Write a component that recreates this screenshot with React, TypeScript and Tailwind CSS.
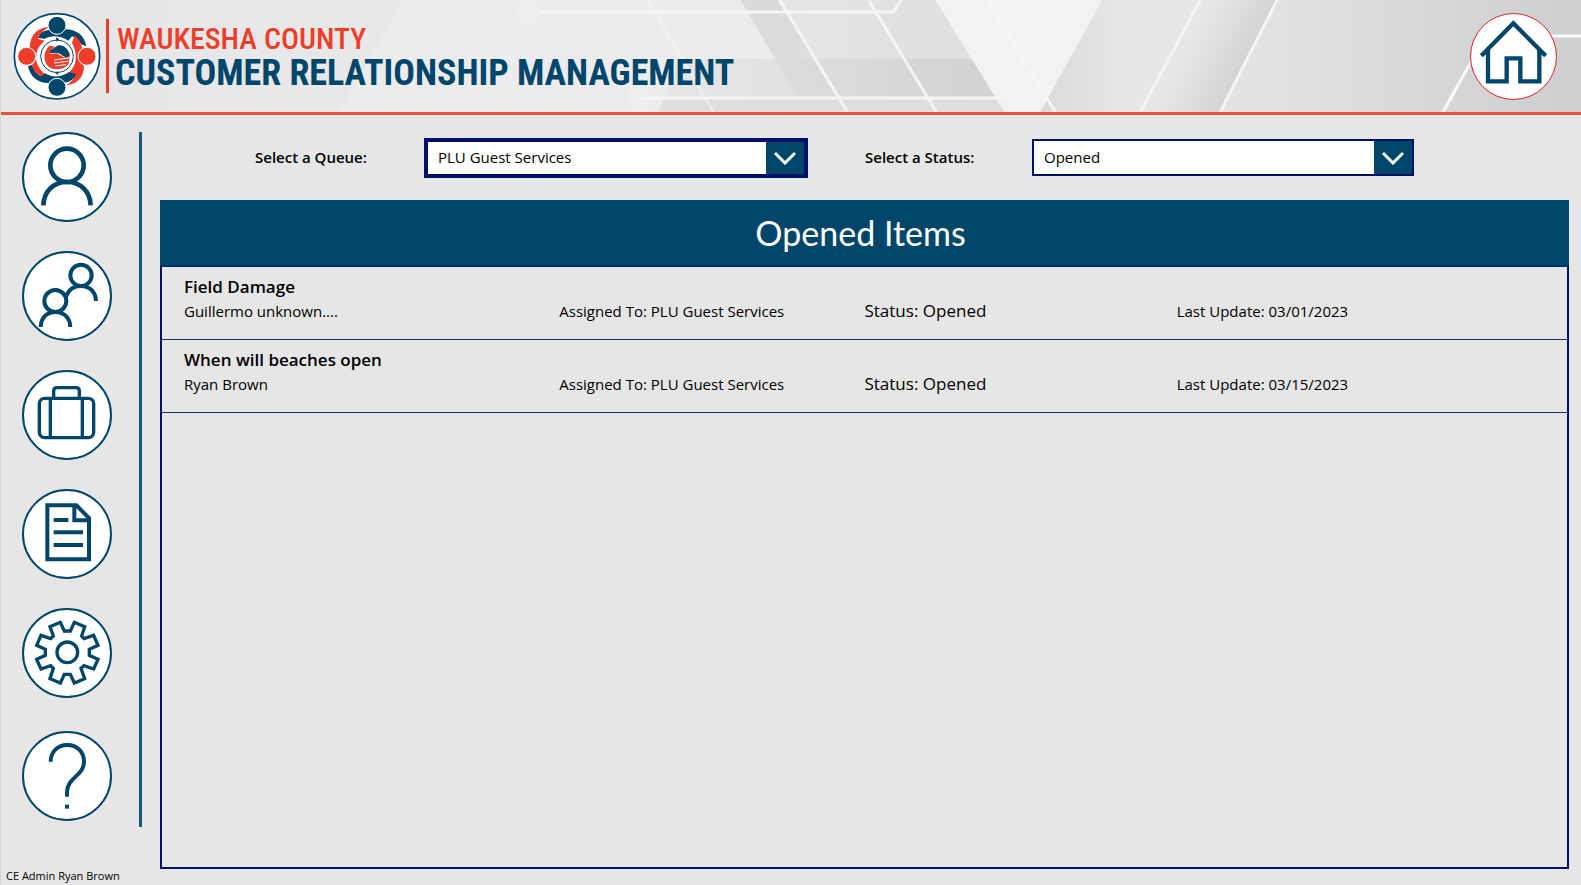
import React from 'react';

const NAVY = '#00466b';
const RED = '#ee3e2a';

type NavItem = { label: string; viewBox: string; drawing: React.ReactNode };

const navItems: NavItem[] = [
  {
    label: 'Customer',
    viewBox: '72 41 258 258',
    drawing: (
      <g strokeWidth="14">
        <circle cx="201" cy="135" r="50" />
        <path d="M130 255 C132 212 160 185 201 185 C242 185 270 212 272 255" />
      </g>
    ),
  },
  {
    label: 'Contacts',
    viewBox: '72 399 258 258',
    drawing: (
      <g strokeWidth="12">
        <circle cx="243" cy="466" r="32" />
        <path d="M198 530 C206 508 222 498 243 498 C270 498 287 516 288 543" />
        <circle cx="166" cy="543" r="33" />
        <path d="M122 621 C123 594 139 576 166 576 C193 576 210 594 211 621" />
      </g>
    ),
  },
  {
    label: 'Cases',
    viewBox: '72 35 258 258',
    drawing: (
      <g strokeWidth="10">
        <rect x="118" y="114" width="163" height="118" rx="16" />
        <path d="M151 114 V232 M247 114 V232 M161 114 V92 Q161 82 171 82 H228 Q238 82 238 92 V114" />
      </g>
    ),
  },
  {
    label: 'Documents',
    viewBox: '72 395 258 258',
    drawing: (
      <g strokeWidth="12">
        <path d="M142 438 H229 L267 476 V600 H142 Z" />
        <path d="M223 438 V483 H267 M161 482 H205 M161 519 H249 M161 557 H249" />
      </g>
    ),
  },
  {
    label: 'Settings',
    viewBox: '72 32 258 258',
    drawing: (
      <g strokeWidth="10">
        <circle cx="202" cy="159" r="31" />
        <path d="M193 95 H211 L223 69 L254 82 L245 110 L252 118 L281 108 L294 138 L268 150 V168 L294 180 L281 209 L252 199 L243 207 L254 238 L223 251 L211 225 H193 L181 251 L150 238 L160 207 L152 199 L123 209 L110 180 L136 168 V150 L110 138 L123 108 L152 118 L160 110 L150 82 L181 69 Z" />
      </g>
    ),
  },
  {
    label: 'Help',
    viewBox: '72 400 258 258',
    drawing: (
      <g strokeWidth="12">
        <path d="M152 486 C152 456 173 436 202 436 C231 436 252 457 252 486 C252 530 201 532 201 578 V591" />
        <path d="M201 615 V627" />
      </g>
    ),
  },
];

const items = [
  { title: 'Field Damage', name: 'Guillermo unknown....', queue: 'PLU Guest Services', status: 'Opened', updated: '03/01/2023' },
  { title: 'When will beaches open', name: 'Ryan Brown', queue: 'PLU Guest Services', status: 'Opened', updated: '03/15/2023' },
];

function HeaderArt() {
  return (
    <svg className="absolute inset-0 h-full w-full" viewBox="0 0 1581 112" preserveAspectRatio="none" aria-hidden="true">
      <defs>
        <linearGradient id="base">
          <stop offset="0" stopColor="#e6e6e8" />
          <stop offset="0.42" stopColor="#eaeaeb" />
          <stop offset="0.58" stopColor="#dfe0e1" />
          <stop offset="0.8" stopColor="#e1e2e3" />
          <stop offset="1" stopColor="#cdcecf" />
        </linearGradient>
        <linearGradient id="band" x1="0" y1="0" x2="0" y2="1">
          <stop offset="0" stopColor="#d9dadb" />
          <stop offset="1" stopColor="#dedfe0" />
        </linearGradient>
        <linearGradient id="slope">
          <stop offset="0" stopColor="#dadadb" />
          <stop offset="0.55" stopColor="#e7e7e9" />
          <stop offset="1" stopColor="#e6e7e8" />
        </linearGradient>
        <linearGradient id="fold" gradientUnits="userSpaceOnUse" x1="1195" y1="30" x2="1262" y2="65">
          <stop offset="0" stopColor="#e6e7e8" />
          <stop offset="1" stopColor="#cdcecf" />
        </linearGradient>
        <linearGradient id="shelf">
          <stop offset="0" stopColor="#dedfe0" stopOpacity="0.4" />
          <stop offset="1" stopColor="#d0d1d2" />
        </linearGradient>
      </defs>
      <rect width="1581" height="112" fill="url(#base)" />
      <path d="M402 0 H740 L806 112 H338 Z" fill="#ececee" />
      <path d="M740 0 H779 L847 112 H806 Z" fill="url(#band)" />
      <path d="M679 59 H975 L1000 98 H664 Z" fill="url(#shelf)" />
      <path d="M664 98 H1000 L1006 112 H658 Z" fill="#dddee0" />
      <path d="M1102 0 H1200 L1140 112 H1040 Z" fill="url(#slope)" />
      <path d="M1200 0 H1277 L1219 112 H1140 Z" fill="url(#fold)" />
      <path d="M935 0 H1102 L1040 112 H1004 Z" fill="#f2f2f3" />
      <circle cx="527" cy="12" r="13" fill="#eeeeef" />
      <circle cx="639" cy="98" r="13" fill="#eeeeef" />
      <g fill="none" stroke="#f5f5f6" strokeWidth="3">
        <path d="M540 12 H893 L901 0 M640 98 H1005 M779 0 L847 112 M868 0 L936 112 M1277 0 L1220 112 M1200 0 L1140 112" />
        <path d="M647 0 L713 112 M1063 0 L1007 98" opacity="0.6" />
        <path d="M987 0 L1055 112" />
        <path d="M1492 24 L1443 112 M1540 36 H1581" stroke="#fafafa" />
      </g>
    </svg>
  );
}

function Logo() {
  return (
    <svg className="h-[88px] w-[88px] shrink-0" viewBox="37 36 264 264" role="img" aria-label="Waukesha County">
      <circle cx="169" cy="169" r="128" fill="#fff" stroke={NAVY} strokeWidth="5" />
      <path d="M88 148 C86 106 110 82 146 82 C126 92 116 104 112 116 L132 122 C118 134 110 146 108 158 Z" fill={RED} />
      <path d="M112 114 C120 96 132 90 148 90 C160 108 178 108 190 88 C226 86 252 106 257 139 L242 133 C236 122 228 114 214 109 L203 122 C180 105 150 105 132 116 Z" fill={NAVY} />
      <path d="M222 106 C236 118 244 134 244 146 C230 160 232 182 250 198 C250 232 228 254 196 256 C212 246 220 238 223 224 L206 216 C226 198 234 168 214 128 Z" fill={RED} />
      <path d="M82 198 C88 230 112 250 144 249 C156 230 180 230 192 248 C210 246 222 236 226 222 L205 216 C180 234 150 232 134 220 L118 228 C106 220 98 208 94 194 Z" fill={NAVY} />
      <path d="M94 194 C108 184 110 160 106 146 C100 180 114 210 134 222 L118 228 C104 220 96 208 94 194 Z" fill={RED} />
      <circle cx="169" cy="169" r="54" fill="#fff" />
      <circle cx="169" cy="169" r="49" fill="none" stroke={NAVY} strokeWidth="3" />
      <path d="M166 112 l10 6 l-9 7 Z M172 213 l-9 6 l10 6 Z" fill={NAVY} />
      <path d="M146 137 C128 154 126 184 144 200 C160 212 190 210 204 192 L207 168 L190 172 L168 160 L150 162 L146 154 L164 140 Z" fill={RED} />
      <path d="M146 154 L170 137 C188 132 204 148 208 166 C202 174 192 172 184 166 C176 158 168 156 150 160 Z" fill={NAVY} />
      <path d="M160 180 L205 174 M160 189 L202 184 M164 198 L196 194" stroke="#fff" strokeWidth="3" fill="none" />
      <g stroke="#fff" strokeWidth="3">
        <circle cx="169" cy="76" r="27" fill={NAVY} />
        <circle cx="169" cy="262" r="27" fill={NAVY} />
        <circle cx="78" cy="169" r="27" fill={RED} />
        <circle cx="259" cy="169" r="27" fill={RED} />
      </g>
    </svg>
  );
}

function Picker({ id, options, active }: { id: string; options: string[]; active?: boolean }) {
  return (
    <div
      className={
        active
          ? 'relative flex h-10 w-[384px] border-4 border-[#00106b] bg-white'
          : 'relative flex h-[37px] w-[382px] border-2 border-[#00106b] bg-white'
      }
    >
      <select id={id} className="w-full appearance-none bg-transparent px-2.5 text-[15px] text-black outline-none">
        {options.map((o) => (
          <option key={o}>{o}</option>
        ))}
      </select>
      <span className="pointer-events-none absolute inset-y-0 right-0 flex w-[38px] items-center justify-center bg-[#00466b]">
        <svg className="h-3.5 w-[22px]" viewBox="0 0 22 14" fill="none" stroke="#fff" strokeWidth="3" aria-hidden="true">
          <path d="M1 2 L11 12 L21 2" />
        </svg>
      </span>
    </div>
  );
}

export default function App() {
  return (
    <div className="flex min-h-screen flex-col border-l border-[#d4d4d4] bg-[#e6e6e6] font-['Open_Sans','Noto_Sans',sans-serif] text-black">
      <header className="relative flex h-[115px] items-center justify-between border-b-[3px] border-[#e3533f] pr-6 pl-3">
        <HeaderArt />
        <div className="relative flex items-center">
          <Logo />
          <div className="ml-[5px] h-[74px] w-[3px] bg-[#ee3e2a]" />
          <h1 className="ml-1.5 font-['Roboto_Condensed','Liberation_Sans_Narrow',sans-serif] whitespace-nowrap">
            <span className="block pl-0.5 text-[30px] leading-[35px] font-medium text-[#ee3e2a]">WAUKESHA COUNTY</span>
            <span className="block text-[36px] leading-[35px] font-bold text-[#00466b]">CUSTOMER RELATIONSHIP MANAGEMENT</span>
          </h1>
        </div>
        <button type="button" aria-label="Home" className="relative size-[87px] rounded-full border border-[#e02020] bg-white">
          <svg className="size-full" viewBox="996 41 255 255" fill="none" stroke={NAVY} strokeWidth="13" aria-hidden="true">
            <path d="M1027 166 L1123 69 L1220 166" />
            <path d="M1047 148 V243 H1103 V174 H1144 V243 H1201 V148" />
          </svg>
        </button>
      </header>

      <div className="flex flex-1">
        <aside className="flex w-[159px] shrink-0 flex-col justify-between">
          <nav className="mt-[17px] mr-[18px] flex h-[695px] flex-col gap-[29px] border-r-[3px] border-[#1b587a] pl-[21px]">
            {navItems.map((n) => (
              <button
                key={n.label}
                type="button"
                aria-label={n.label}
                className="size-[90px] shrink-0 rounded-full border-2 border-[#00466b] bg-white last:mt-1"
              >
                <svg className="size-full" viewBox={n.viewBox} fill="none" stroke={NAVY} aria-hidden="true">
                  {n.drawing}
                </svg>
              </button>
            ))}
          </nav>
          <p className="pb-px pl-[5px] text-[11px] leading-4">CE Admin Ryan Brown</p>
        </aside>

        <main className="mr-3 mb-4 flex flex-1 flex-col">
          <div className="flex h-[85px] items-center pl-[95px]">
            <label htmlFor="queue" className="w-[169px] text-[15px] font-semibold">
              Select a Queue:
            </label>
            <Picker id="queue" options={['PLU Guest Services']} active />
            <label htmlFor="status" className="ml-[57px] w-[167px] text-[15px] font-semibold">
              Select a Status:
            </label>
            <Picker id="status" options={['Opened']} />
          </div>

          <section className="flex flex-1 flex-col border-2 border-[#00106b]">
            <h2 className="-mx-0.5 -mt-0.5 flex h-[67px] items-center justify-center border-b-2 border-[#00306b] bg-[#00466b] pr-2 font-['Lato',sans-serif] text-[34px] text-white">
              Opened Items
            </h2>
            <ul>
              {items.map((it) => (
                <li
                  key={it.title}
                  className="grid h-[73px] grid-cols-[375fr_305fr_312fr_390fr] content-start border-b border-[#1c2c78] pt-2 pl-[22px] text-[15px] leading-6"
                >
                  <h3 className="col-span-4 text-[17px] font-semibold">{it.title}</h3>
                  <span>{it.name}</span>
                  <span>Assigned To: {it.queue}</span>
                  <span className="text-[17px]">Status: {it.status}</span>
                  <span>Last Update: {it.updated}</span>
                </li>
              ))}
            </ul>
          </section>
        </main>
      </div>
    </div>
  );
}
